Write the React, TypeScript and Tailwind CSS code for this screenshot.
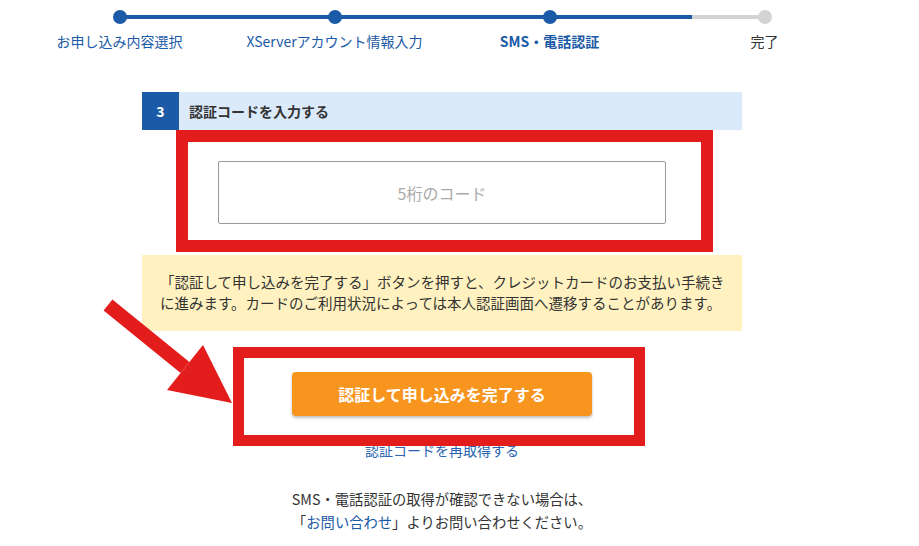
import React from "react";

const steps = [
  { label: "お申し込み内容選択", done: true, current: false },
  { label: "XServerアカウント情報入力", done: true, current: false },
  { label: "SMS・電話認証", done: true, current: true },
  { label: "完了", done: false, current: false },
];

function Progress() {
  return (
    <div className="relative w-[860px] pt-[10px]">
      {/* track */}
      <div className="absolute left-[107px] top-[15px] h-[4px] w-[645px] bg-[#d3d3d3]" />
      <div className="absolute left-[107px] top-[15px] h-[4px] w-[573px] bg-[#1b5aa6]" />
      <div className="relative grid grid-cols-4">
        {steps.map((s) => (
          <div key={s.label} className="flex flex-col items-center">
            <div
              className={
                s.done
                  ? "h-[14px] w-[14px] rounded-full bg-[#1b5aa6]"
                  : "h-[14px] w-[14px] rounded-full bg-[#d3d3d3]"
              }
            />
            <div
              className={
                s.current
                  ? "mt-[7px] text-[14px] leading-[20px] font-bold text-[#1b5aa6]"
                  : s.done
                  ? "mt-[7px] text-[14px] leading-[20px] text-[#1b5aa6]"
                  : "mt-[7px] text-[14px] leading-[20px] text-[#333]"
              }
            >
              {s.label}
            </div>
          </div>
        ))}
      </div>
    </div>
  );
}

function Arrow() {
  return (
    <svg
      className="pointer-events-none absolute left-0 top-0 z-20"
      width="919"
      height="546"
      viewBox="0 0 919 546"
    >
      <polygon points="112.4,299.5 103.6,310.5 180.6,373 189.4,362" fill="#e31c1c" />
      <polygon points="167,390 203,345 232,403" fill="#e31c1c" />
    </svg>
  );
}

export default function App() {
  return (
    <div
      className="relative h-[546px] w-[919px] overflow-hidden bg-white text-[#333]"
      style={{ fontFamily: '"Noto Sans CJK JP", "Noto Sans", sans-serif' }}
    >
      <Arrow />
      <div className="flex w-[884px] flex-col items-center">
        <Progress />

        <div className="mt-[41px] w-[600px]">
          {/* section header */}
          <div className="flex h-[38px] items-stretch bg-[#dbeafb]">
            <div className="flex w-[37px] items-center justify-center bg-[#1b5aa6] text-[14px] font-bold text-white">
              3
            </div>
            <div className="flex items-center pl-[10px] text-[14px] font-bold text-[#333]">
              認証コードを入力する
            </div>
          </div>

          {/* code input (annotated) */}
          <div className="ml-[34px] h-[122px] w-[537px] border-[12px] border-[#e31c1c] pl-[30px] pt-[19px]">
            <div className="flex h-[63px] w-[448px] items-center justify-center rounded-[2px] border border-[#9a9a9a] bg-white text-[16px] text-[#aaa]">
              5桁のコード
            </div>
          </div>

          {/* notice */}
          <div className="mt-[3px] h-[76px] whitespace-nowrap bg-[#fff2c0] px-[18px] pt-[16px] text-[14.5px] leading-[21px] text-[#333]">
            「認証して申し込みを完了する」ボタンを押すと、クレジットカードのお支払い手続き
            <br />
            に進みます。カードのご利用状況によっては本人認証画面へ遷移することがあります。
          </div>

          {/* submit (annotated) */}
          <div className="relative z-10 ml-[91px] mt-[16px] h-[99px] w-[412px] border-[11px] border-[#e31c1c] bg-white pl-[48px] pt-[14px]">
            <button className="flex h-[44px] w-[300px] items-center justify-center rounded-[4px] bg-[#f7951f] text-[16px] font-bold text-white shadow-[0_2px_3px_rgba(0,0,0,0.25)]">
              認証して申し込みを完了する
            </button>
          </div>
          <div className="-mt-[6px] text-center text-[14px] leading-[20px] text-[#2a64b0]">
            認証コードを再取得する
          </div>

          <div className="mt-[27px] text-center text-[14.3px] leading-[23px] text-[#333]">
            SMS・電話認証の取得が確認できない場合は、
            <br />
            「<span className="text-[#1b5aa6]">お問い合わせ</span>」よりお問い合わせください。
          </div>
        </div>
      </div>
    </div>
  );
}
